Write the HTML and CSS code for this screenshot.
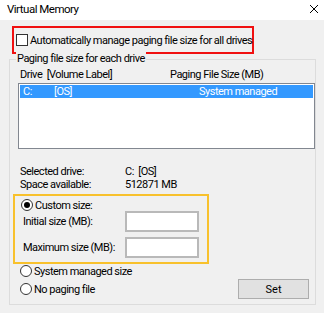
FILE: index.html
```html
<!DOCTYPE html>
<html lang="en">
<head>
  <meta charset="UTF-8">
  <title>Virtual Memory</title>
  <link rel="stylesheet" href="styles.css">
</head>
<body>
<div class="dialog">
  <div class="titlebar">
    <span class="title">Virtual Memory</span>
    <svg class="close" width="10" height="10" viewBox="0 0 10 10">
      <path d="M1 1 L9 9 M9 1 L1 9" stroke="#000" stroke-width="1" fill="none"/>
    </svg>
  </div>

  <div class="content">
    <label class="auto-box">
      <span class="checkbox"></span>
      <span>Automatically manage paging file size for all drives</span>
    </label>

    <div class="group">
      <span class="legend">Paging file size for each drive</span>

      <div class="list-header">
        <span class="col-drive">Drive&nbsp; [Volume Label]</span>
        <span>Paging File Size (MB)</span>
      </div>

      <div class="drive-list">
        <div class="drive-row selected">
          <span class="col-letter">C:</span>
          <span class="col-label">[OS]</span>
          <span>System managed</span>
        </div>
      </div>

      <div class="info-row first">
        <span class="info-label">Selected drive:</span>
        <span>C:&nbsp; [OS]</span>
      </div>
      <div class="info-row">
        <span class="info-label">Space available:</span>
        <span>512871 MB</span>
      </div>

      <div class="custom-box">
        <label class="radio-row">
          <span class="radio checked"></span>
          <span>Custom size:</span>
        </label>
        <div class="size-row">
          <span class="size-label">Initial size (MB):</span>
          <input class="size-input" type="text">
        </div>
        <div class="size-row second">
          <span class="size-label">Maximum size (MB):</span>
          <input class="size-input" type="text">
        </div>
      </div>

      <label class="radio-row outer">
        <span class="radio"></span>
        <span>System managed size</span>
      </label>

      <div class="bottom-row">
        <label class="radio-row outer">
          <span class="radio"></span>
          <span>No paging file</span>
        </label>
        <button class="set-button">Set</button>
      </div>
    </div>
  </div>
</div>
</body>
</html>
```
FILE: styles.css
```css
body {
  margin: 0;
  font-family: Roboto, "Liberation Sans", sans-serif;
  font-size: 11px;
  letter-spacing: -0.5px;
  color: #000;
  white-space: nowrap;
}
.dialog {
  width: 324px;
  height: 313px;
  background: #f0f0f0;
  overflow: hidden;
}
.titlebar {
  height: 20px;
  background: #fff;
  display: flex;
  align-items: center;
  padding-left: 7px;
  padding-right: 5px;
}
.title {
  flex: 1;
  font-size: 11.5px;
  margin-top: -2px;
}
.close {
  margin-top: -3px;
}

.content {
  padding-top: 6px;
}
.auto-box {
  box-sizing: border-box;
  display: flex;
  align-items: center;
  width: 242px;
  height: 28px;
  margin-left: 12px;
  padding-left: 2px;
  border: 2px solid #f01010;
}
.checkbox {
  box-sizing: border-box;
  flex: none;
  width: 12px;
  height: 12px;
  border: 1px solid #333;
  background: #fff;
  margin-right: 2px;
}

.group {
  position: relative;
  box-sizing: border-box;
  width: 307px;
  margin: 5px 0 0 9px;
  padding: 8px 0 5px 0;
  border: 1px solid #dcdcdc;
}
.legend {
  position: absolute;
  top: -8px;
  left: 6px;
  padding: 0 1px;
  line-height: 13px;
  background: #f0f0f0;
}
.list-header {
  display: flex;
  line-height: 14px;
  padding-left: 10px;
}
.col-drive {
  width: 150px;
}
.drive-list {
  box-sizing: border-box;
  height: 66px;
  margin: 1px 0 0 8px;
  padding: 1px;
  background: #fff;
  border: 1px solid #828790;
}
.drive-row {
  display: flex;
  height: 13px;
  line-height: 13px;
  padding-left: 3px;
}
.drive-row.selected {
  background: #3399ff;
  color: #fff;
}
.col-letter {
  width: 31px;
}
.col-label {
  width: 145px;
}

.info-row {
  display: flex;
  line-height: 13px;
  padding-left: 10px;
}
.info-row.first {
  margin-top: 16px;
}
.info-label {
  width: 105px;
}

.custom-box {
  box-sizing: border-box;
  width: 196px;
  height: 70px;
  margin: 3px 0 0 3px;
  padding: 3px 0 0 0;
  border: 2px solid #f8c12c;
}
.radio-row {
  display: flex;
  align-items: center;
  height: 12px;
  padding-left: 6px;
}
.radio-row.outer {
  padding-left: 10px;
  margin-top: 1px;
}
.radio {
  box-sizing: border-box;
  flex: none;
  width: 12px;
  height: 12px;
  margin-right: 2px;
  border: 1px solid #333;
  border-radius: 50%;
  background: #fff;
  display: flex;
  align-items: center;
  justify-content: center;
}
.radio.checked::after {
  content: "";
  width: 6px;
  height: 6px;
  border-radius: 50%;
  background: #000;
}
.size-row {
  display: flex;
  align-items: center;
  height: 21px;
}
.size-row.second {
  margin-top: 5px;
}
.size-label {
  width: 102px;
  padding-left: 8px;
}
.size-input {
  box-sizing: border-box;
  width: 74px;
  height: 21px;
  margin: 0;
  border: 2px solid #b9b9b9;
  background: #fff;
}

.bottom-row {
  display: flex;
  align-items: center;
  height: 20px;
  margin-top: 2px;
}
.bottom-row .radio-row.outer {
  margin-top: 0;
}
.set-button {
  box-sizing: border-box;
  width: 71px;
  height: 20px;
  margin: 0 6px 0 auto;
  background: #e1e1e1;
  border: 1px solid #adadad;
  font: inherit;
  color: #000;
}
```
